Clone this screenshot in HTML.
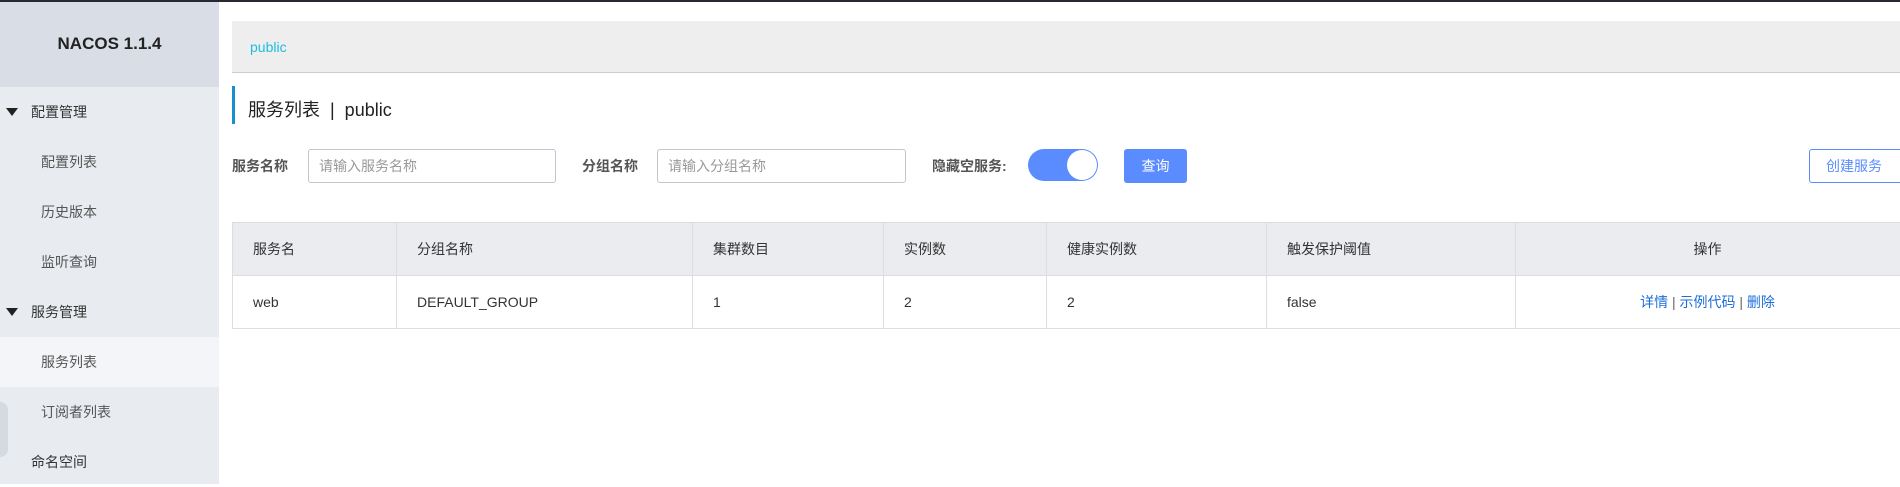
<!DOCTYPE html>
<html><head><meta charset="utf-8"><style>
*{margin:0;padding:0;box-sizing:border-box}
body{width:1900px;height:484px;overflow:hidden;background:#fff;font-family:"Liberation Sans","Noto Sans CJK SC",sans-serif;font-size:14px;color:#333;position:relative}
.abs{position:absolute}
.side{left:0;top:0;width:219px;height:484px;background:#e8ebf0}
.logo{left:0;top:0;width:219px;height:87px;background:#d9dee6;text-align:center;line-height:88px;font-weight:bold;font-size:17px;color:#222}
.mi{left:0;width:219px;height:50px;line-height:50px;font-size:14px;color:#333}
.mi.sub{padding-left:41px;color:#555}
.mi.top{padding-left:31px}
.tri{position:absolute;left:6px;top:21px;border-left:6px solid transparent;border-right:6px solid transparent;border-top:8px solid #222}
.inp{height:34px;border:1px solid #c4c6cf;border-radius:3px;padding-left:10px;line-height:32px;color:#999;font-size:14px}
.lbl{font-weight:bold;color:#555;line-height:34px;top:149px}
table{border-collapse:collapse;position:absolute;left:232px;top:222px;width:1680px}
td,th{border:1px solid #dcdee3;height:53px;text-align:left;padding-left:20px;font-weight:normal}
th{background:#ebecf0;color:#333}
a{color:#1d6ed8;text-decoration:none}
.sep{color:#666}
</style></head><body>
<div class="abs side"></div>
<div class="abs logo">NACOS 1.1.4</div>
<div class="abs mi top" style="top:87px"><span class="tri"></span>配置管理</div>
<div class="abs mi sub" style="top:137px">配置列表</div>
<div class="abs mi sub" style="top:187px">历史版本</div>
<div class="abs mi sub" style="top:237px">监听查询</div>
<div class="abs mi top" style="top:287px"><span class="tri"></span>服务管理</div>
<div class="abs mi sub" style="top:337px;background:#f4f5f8">服务列表</div>
<div class="abs mi sub" style="top:387px">订阅者列表</div>
<div class="abs mi top" style="top:437px;padding-left:31px">命名空间</div>
<div class="abs" style="left:0;top:402px;width:8px;height:55px;background:#d5d9e0;border-radius:0 8px 8px 0"></div>
<div class="abs" style="left:0;top:0;width:1900px;height:2px;background:#262a30"></div>

<div class="abs" style="left:232px;top:21px;width:1668px;height:52px;background:#eeeeee;border-bottom:1px solid #ccc;padding-left:18px;line-height:52px;color:#1ebde0">public</div>
<div class="abs" style="left:232px;top:86px;width:3px;height:38px;background:#1a8fd0"></div>
<div class="abs" style="left:248px;top:96px;font-size:18px;line-height:28px;color:#222">服务列表 &nbsp;|&nbsp; public</div>

<div class="abs lbl" style="left:232px">服务名称</div>
<div class="abs inp" style="left:308px;top:149px;width:248px">请输入服务名称</div>
<div class="abs lbl" style="left:582px">分组名称</div>
<div class="abs inp" style="left:657px;top:149px;width:249px">请输入分组名称</div>
<div class="abs lbl" style="left:932px">隐藏空服务:</div>
<div class="abs" style="left:1028px;top:149px;width:70px;height:32px;border-radius:16px;background:#5b8cff"><div style="position:absolute;right:1px;top:1px;width:30px;height:30px;border-radius:50%;background:#fff"></div></div>
<div class="abs" style="left:1124px;top:149px;width:63px;height:34px;background:#5b8cff;border-radius:3px;color:#fff;text-align:center;line-height:34px">查询</div>
<div class="abs" style="left:1809px;top:149px;width:100px;height:34px;border:1px solid #5b8cff;border-radius:3px;color:#5b8cff;padding-left:16px;line-height:32px">创建服务</div>

<table>
<tr><th style="width:164px">服务名</th><th style="width:296px">分组名称</th><th style="width:191px">集群数目</th><th style="width:163px">实例数</th><th style="width:220px">健康实例数</th><th style="width:249px">触发保护阈值</th><th style="text-align:center;padding:0 12px 0 0">操作</th></tr>
<tr><td>web</td><td>DEFAULT_GROUP</td><td>1</td><td>2</td><td>2</td><td>false</td><td style="text-align:center;padding:0 12px 0 0"><a>详情</a> <span class="sep">|</span> <a>示例代码</a> <span class="sep">|</span> <a>删除</a></td></tr>
</table>
</body></html>
